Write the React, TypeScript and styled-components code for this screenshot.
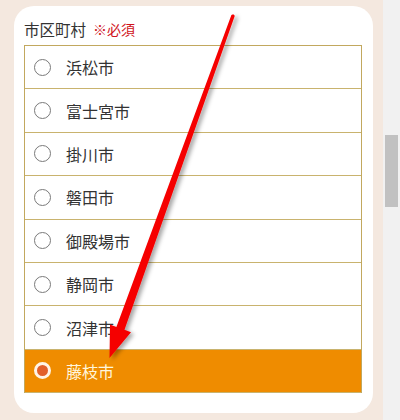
import React from 'react';
import styled, { createGlobalStyle } from 'styled-components';

const GlobalStyle = createGlobalStyle`
  html, body {
    margin: 0;
    padding: 0;
    height: 420px;
    overflow: hidden;
  }
  body {
    font-family: "Noto Sans CJK JP", "Noto Sans", sans-serif;
    background: #f4e8df;
  }
`;

const Page = styled.div`
  display: flex;
  width: 400px;
  height: 420px;
  position: relative;
`;

const Main = styled.div`
  flex: 1;
  padding: 6px 10px 0 14px;
  background: #f4e8df;
`;

const Card = styled.div`
  box-sizing: border-box;
  width: 359px;
  height: 407px;
  background: #fff;
  border-radius: 20px;
  padding: 14px 11px 0 10px;
`;

const Label = styled.div`
  display: flex;
  align-items: center;
  gap: 7px;
  height: 18px;
  margin-bottom: 7px;
  font-size: 15.5px;
  color: #333;
`;

const Required = styled.span`
  font-size: 14px;
  color: #d0121b;
`;

const List = styled.ul`
  list-style: none;
  margin: 0;
  padding: 0;
  border: 1px solid #c2a85e;
  border-bottom: none;
`;

const Row = styled.li<{ $checked?: boolean }>`
  box-sizing: border-box;
  height: 43.4px;
  display: flex;
  align-items: center;
  gap: 15px;
  padding-left: 9px;
  border-bottom: 1px solid #c9b36e;
  background: ${(p) => (p.$checked ? '#ef8c00' : '#fff')};
  color: ${(p) => (p.$checked ? '#fff6dc' : '#333')};
  font-size: 16px;
`;

const Radio = styled.span<{ $checked?: boolean }>`
  box-sizing: border-box;
  width: 17px;
  height: 17px;
  border-radius: 50%;
  border: ${(p) => (p.$checked ? '3px solid #fff4e6' : '1.5px solid #7a7a7a')};
  background: ${(p) => (p.$checked ? '#e2602a' : '#fff')};
  flex: none;
`;

const Track = styled.div`
  width: 17px;
  background: #f1f1f1;
  padding: 135px 2px 0;
  box-sizing: border-box;
`;

const Thumb = styled.div`
  height: 72px;
  background: #c1c1c1;
`;

const Arrow = styled.svg`
  position: absolute;
  left: 0;
  top: 0;
  pointer-events: none;
`;

const cities = ['浜松市', '富士宮市', '掛川市', '磐田市', '御殿場市', '静岡市', '沼津市', '藤枝市'];

export default function App() {
  return (
    <>
      <GlobalStyle />
      <Page>
        <Main>
          <Card>
            <Label>
              市区町村<Required>※必須</Required>
            </Label>
            <List>
              {cities.map((c) => {
                const checked = c === '藤枝市';
                return (
                  <Row key={c} $checked={checked}>
                    <Radio $checked={checked} />
                    {c}
                  </Row>
                );
              })}
            </List>
          </Card>
        </Main>
        <Track>
          <Thumb />
        </Track>
        <Arrow width="400" height="420" viewBox="0 0 400 420">
          <defs>
            <filter id="sh" x="-50%" y="-10%" width="200%" height="120%">
              <feDropShadow dx="3" dy="2" stdDeviation="2" floodColor="#000" floodOpacity="0.35" />
            </filter>
          </defs>
          <polygon
            filter="url(#sh)"
            fill="#f50000"
            points="233.2,14.2 234.8,15.8 124.5,329.8 131,332.2 109.5,358 110,324.6 116.4,326.9 231.4,15"
          />
        </Arrow>
      </Page>
    </>
  );
}
